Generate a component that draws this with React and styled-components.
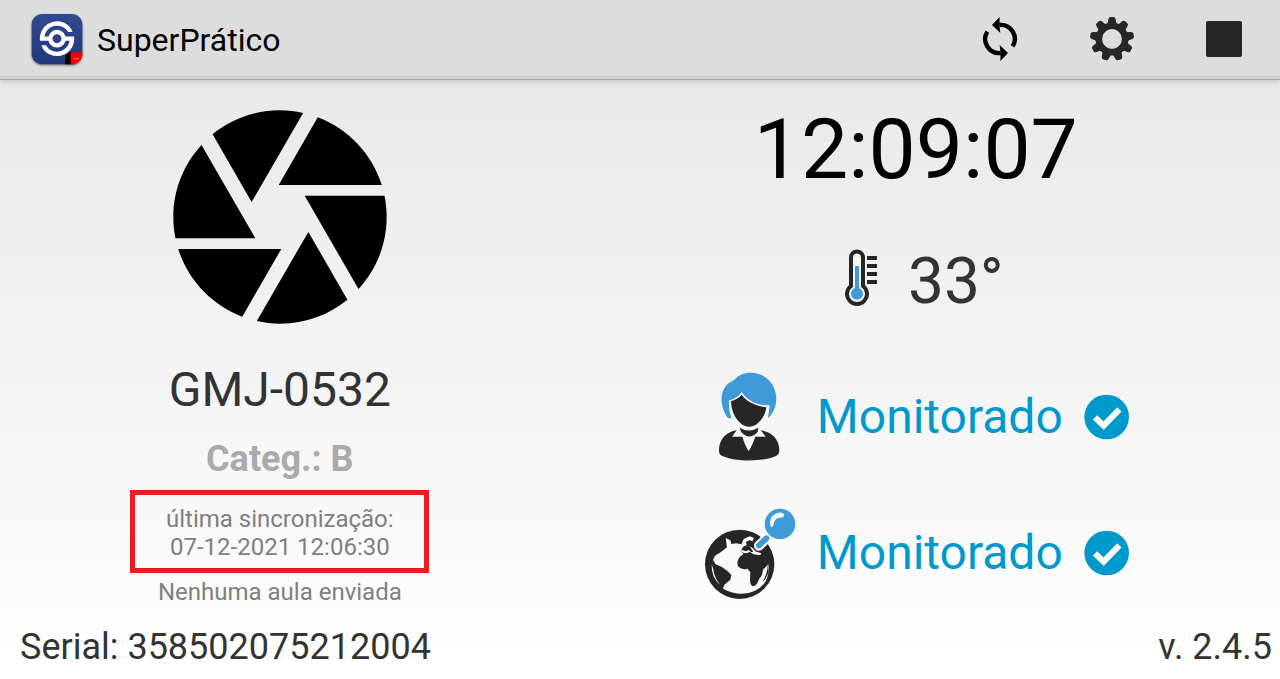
import React, { useState } from "react";
import styled, { createGlobalStyle } from "styled-components";

const DARK = "#262626";
const BLUE = "#3f9bd8";

const services = [
  { key: "student", label: "Monitorado", icon: PersonIcon },
  { key: "location", label: "Monitorado", icon: GlobeIcon },
];

export default function App() {
  const [device] = useState({
    plate: "GMJ-0532",
    category: "B",
    lastSync: "07-12-2021 12:06:30",
    serial: "358502075212004",
    version: "2.4.5",
    temperature: 33,
    time: "12:09:07",
  });

  return (
    <>
      <GlobalStyle />
      <Page>
        <Header>
          <Logo />
          <Title>SuperPrático</Title>
          <Actions>
            <ActionButton type="button" aria-label="Sincronizar">
              <SyncIcon />
            </ActionButton>
            <ActionButton type="button" aria-label="Configurações">
              <GearIcon />
            </ActionButton>
            <ActionButton type="button" aria-label="Parar">
              <StopIcon />
            </ActionButton>
          </Actions>
        </Header>
        <Content>
          <Vehicle>
            <CameraIcon />
            <Plate>{device.plate}</Plate>
            <Category>Categ.: {device.category}</Category>
            <SyncBox>
              última sincronização:
              <br />
              {device.lastSync}
            </SyncBox>
            <Note>Nenhuma aula enviada</Note>
          </Vehicle>
          <Status>
            <Clock>{device.time}</Clock>
            <TemperatureRow>
              <ThermometerIcon />
              <Temperature>{device.temperature}°</Temperature>
            </TemperatureRow>
            <ServiceList>
              {services.map(({ key, label, icon: Icon }) => (
                <ServiceRow key={key}>
                  <Icon />
                  <ServiceLabel>{label}</ServiceLabel>
                  <CheckIcon />
                </ServiceRow>
              ))}
            </ServiceList>
          </Status>
        </Content>
        <Footer>
          <span>Serial: {device.serial}</span>
          <span>v. {device.version}</span>
        </Footer>
      </Page>
    </>
  );
}

function Logo() {
  return (
    <LogoSvg viewBox="0 0 156 156" aria-hidden="true">
      <defs>
        <clipPath id="logo-clip">
          <rect x="2" y="3" width="152" height="151" rx="32" />
        </clipPath>
        <linearGradient id="logo-bg" x1="0" y1="0" x2="0" y2="1">
          <stop offset="0" stopColor="#304a92" />
          <stop offset="1" stopColor="#22377d" />
        </linearGradient>
      </defs>
      <g clipPath="url(#logo-clip)">
        <rect width="156" height="156" fill="url(#logo-bg)" />
        <path d="M102 156V138Q104 118 122 118V156Z" fill="#000" />
        <path d="M119 156V124Q119 118 126 118H156V156Z" fill="#f00" />
        <path d="M129 137H143" stroke="#ff9a9a" strokeWidth="3" />
      </g>
      <g fill="none" stroke="#fff" strokeWidth="13">
        <circle cx="78" cy="77" r="20" />
        <path d="M117 54A45 45 0 0 0 33 77H58" />
        <path d="M39 100A45 45 0 0 0 123 77H98" />
      </g>
      <path d="M110 57H125L118 46ZM46 97H31L38 108Z" fill="#fff" />
    </LogoSvg>
  );
}

function SyncIcon() {
  return (
    <Icon48 viewBox="0 0 144 144" aria-hidden="true">
      <g fill="none" stroke="#000" strokeWidth="13">
        <path d="M70 30A42 42 0 0 1 110 94" />
        <path d="M74 114A42 42 0 0 1 34 50" />
      </g>
      <path d="M48 30L71 6Q69 30 73 54Z" />
      <path d="M96 114L73 138Q75 114 71 90Z" />
    </Icon48>
  );
}

function GearIcon() {
  return (
    <Icon48 viewBox="-24 -24 48 48" aria-hidden="true">
      <circle r="13.2" fill="none" stroke={DARK} strokeWidth="6.6" />
      {[...Array(9)].map((_, i) => (
        <path
          key={i}
          transform={`rotate(${i * 40 + 20})`}
          d="M-4.6 14.5L-3.6 20Q-3.2 22 -1.6 22H1.6Q3.2 22 3.6 20L4.6 14.5Z"
          fill={DARK}
        />
      ))}
    </Icon48>
  );
}

function StopIcon() {
  return (
    <Icon48 viewBox="0 0 48 48" aria-hidden="true">
      <rect x="6" y="6" width="36" height="36" rx="2" fill={DARK} />
    </Icon48>
  );
}

function CameraIcon() {
  return (
    <CameraSvg viewBox="0 0 24 24" aria-hidden="true">
      <path d="M9.4 10.5l4.77-8.26C13.47 2.09 12.75 2 12 2c-2.4 0-4.6.85-6.32 2.25l3.66 6.35.06-.1zM21.54 9c-.92-2.92-3.15-5.26-6-6.34L11.88 9h9.66zm.26 1h-7.49l.29.5 4.76 8.25C21 16.97 22 14.61 22 12c0-.69-.07-1.35-.2-2zM8.54 12l-3.9-6.75C3.01 7.03 2 9.39 2 12c0 .69.07 1.35.2 2h7.49l-1.15-2zm-6.08 3c.92 2.92 3.15 5.26 6 6.34L12.12 15H2.46zm11.27 0l-3.9 6.76c.7.15 1.42.24 2.17.24 2.4 0 4.6-.85 6.32-2.25l-3.66-6.35-.93 1.6z" />
    </CameraSvg>
  );
}

function ThermometerIcon() {
  return (
    <ThermometerSvg viewBox="0 0 64 64" aria-hidden="true">
      <path
        d="M23 11.5a6 6 0 0 1 12 0V40a10 10 0 1 1-12 0Z"
        fill="#f4f4f4"
        stroke={DARK}
        strokeWidth="4"
      />
      <path d="M27 20h4v22a6 6 0 1 1-4 0Z" fill={BLUE} />
      <path d="M39 12h10M39 20h10M39 28h10M39 36h10" stroke={DARK} strokeWidth="4" />
    </ThermometerSvg>
  );
}

function PersonIcon() {
  return (
    <ServiceSvg viewBox="0 0 288 288" aria-hidden="true">
      <path
        d="M80 146C64 124 56 92 66 66C73 48 88 38 99 34C112 17 130 11 148 11C194 11 225 46 226 88C226 114 215 137 201 147L206 109C166 109 139 95 122 68C113 84 98 90 84 94Q82 120 91 146Q86 150 80 146Z"
        fill={BLUE}
      />
      <path
        d="M90 97Q112 89 122 77C136 97 163 111 196 115C193 138 181 156 165 167Q144 179 124 167C106 154 91 131 90 97Z"
        fill={DARK}
      />
      <path d="M116 176Q144 193 172 176L170 189Q144 216 120 188Z" fill={DARK} />
      <path
        d="M107 184L93 203H124C129 220 135 234 143 246C151 234 157 220 163 203H194L180 184C211 188 234 210 235 242C235 253 232 257 225 261C184 279 105 279 64 261C56 257 54 253 54 242C55 211 76 188 107 184Z"
        fill={DARK}
      />
    </ServiceSvg>
  );
}

function GlobeIcon() {
  return (
    <ServiceSvg viewBox="0 0 288 288" aria-hidden="true">
      <circle cx="116" cy="178" r="104" fill={DARK} />
      {/* oceans */}
      <path
        d="M74 99L88 106L91 117L105 115L121 118L128 102L146 94L158 98L156 108L144 106L135 111L137 120L126 126L119 139L128 146L116 156Q106 169 111 184Q122 197 139 191L148 202L147 226Q148 243 157 244Q169 240 173 224L183 210L186 194L202 178Q207 205 193 231Q170 265 122 266Q94 266 66 251L70 239L88 224L91 209L80 199L63 186L44 178L36 165L42 152L61 140L78 127Z"
        fill="#fafafa"
      />
      <path d="M32 178Q30 216 57 240Q43 222 39 205Q37 190 32 178Z" fill="#fafafa" />
      <path
        d="M119 139L131 126L145 124L156 130L163 139L181 145L177 151L158 148L147 141L135 145L127 143Z"
        fill="#fafafa"
      />
      <path d="M122 134L130 124L146 124L157 141L150 141L143 135L135 139Z" fill={DARK} />
      <path d="M201 178Q199 208 184 232Q197 220 203 200Z" fill={DARK} />
      {/* magnifier */}
      <path d="M174 122L198 99" stroke="#fafafa" strokeWidth="30" strokeLinecap="round" />
      <path d="M174 121L196 100" stroke={BLUE} strokeWidth="18" strokeLinecap="round" />
      <circle cx="237" cy="57" r="46" fill={BLUE} />
      <path
        d="M208 63Q203 35 224 26Q238 18 249 27Q251 34 244 38Q222 35 218 57Q216 71 208 63Z"
        fill="#f5f8fb"
      />
    </ServiceSvg>
  );
}

function CheckIcon() {
  return (
    <Icon48 viewBox="0 0 144 144" aria-hidden="true">
      <circle cx="71" cy="72" r="67" fill="#0099cc" />
      <path d="M36 73L62 98L109 49" fill="none" stroke="#fafafa" strokeWidth="18" />
    </Icon48>
  );
}

const GlobalStyle = createGlobalStyle`
  * {
    box-sizing: border-box;
  }
  body {
    margin: 0;
    font-family: Roboto, "Noto Sans", sans-serif;
    color: #333;
  }
`;

const Page = styled.div`
  display: flex;
  flex-direction: column;
  min-height: 100vh;
  background: linear-gradient(#e6e6e6, #fff);
`;

const Header = styled.header`
  display: flex;
  align-items: center;
  gap: 14px;
  padding: 0 0 2px 31px;
  border-bottom: 1px solid #a6a6a6;
  background: #ddd;
  box-shadow: inset 0 -3px 0 #d2d2d2, 0 2px 6px rgba(0, 0, 0, 0.15);
`;

const Title = styled.h1`
  margin: 0;
  padding-top: 2px;
  color: #000;
  font-size: 32px;
  font-weight: 400;
  line-height: 40px;
`;

const Actions = styled.nav`
  display: flex;
  margin-left: auto;
`;

const ActionButton = styled.button`
  display: flex;
  align-items: center;
  justify-content: center;
  width: 112px;
  height: 77px;
  padding: 0;
  border: 0;
  background: transparent;
  cursor: pointer;
`;

const LogoSvg = styled.svg`
  width: 52px;
  height: 52px;
  filter: drop-shadow(0 1px 1px rgba(0, 0, 0, 0.5));
`;

const Icon48 = styled.svg`
  width: 48px;
  height: 48px;
`;

const CameraSvg = styled.svg`
  width: 256px;
  height: 256px;
`;

const ThermometerSvg = styled.svg`
  width: 64px;
  height: 64px;
`;

const ServiceSvg = styled.svg`
  width: 96px;
  height: 96px;
`;

const Content = styled.main`
  display: grid;
  grid-template-columns: 11fr 14fr;
  flex: 1;
  padding: 9px 8px 0 0;
`;

const Vehicle = styled.section`
  display: flex;
  flex-direction: column;
  align-items: center;
`;

const Plate = styled.h2`
  margin: 17px 0 0;
  font-size: 48px;
  font-weight: 400;
  line-height: 56px;
`;

const Category = styled.p`
  margin: 19px 0 0;
  color: #aaa;
  font-size: 36px;
  font-weight: 700;
  line-height: 44px;
`;

const SyncBox = styled.p`
  min-width: 299px;
  margin: 9px 0 0;
  padding: 10px 16px 7px;
  border: 5px solid #ed1c24;
  color: #808080;
  font-size: 24px;
  line-height: 28px;
  text-align: center;
`;

const Note = styled.p`
  margin: 5px 0 0;
  color: #808080;
  font-size: 24px;
  line-height: 28px;
`;

const Status = styled.section`
  display: flex;
  flex-direction: column;
  align-items: center;
`;

const Clock = styled.time`
  margin-top: 11px;
  color: #000;
  font-size: 84px;
  line-height: 100px;
`;

const TemperatureRow = styled.div`
  display: flex;
  align-items: flex-end;
  gap: 16px;
  margin-top: 46px;
`;

const Temperature = styled.span`
  font-size: 64px;
  line-height: 56px;
`;

const ServiceList = styled.div`
  display: flex;
  flex-direction: column;
  gap: 40px;
  margin-top: 59px;
`;

const ServiceRow = styled.div`
  display: flex;
  align-items: center;
`;

const ServiceLabel = styled.span`
  margin: 0 20px;
  color: #0099cc;
  font-size: 48px;
  line-height: 56px;
`;

const Footer = styled.footer`
  display: flex;
  justify-content: space-between;
  padding: 12px 8px 10px 20px;
  font-size: 36px;
  line-height: 44px;
`;
